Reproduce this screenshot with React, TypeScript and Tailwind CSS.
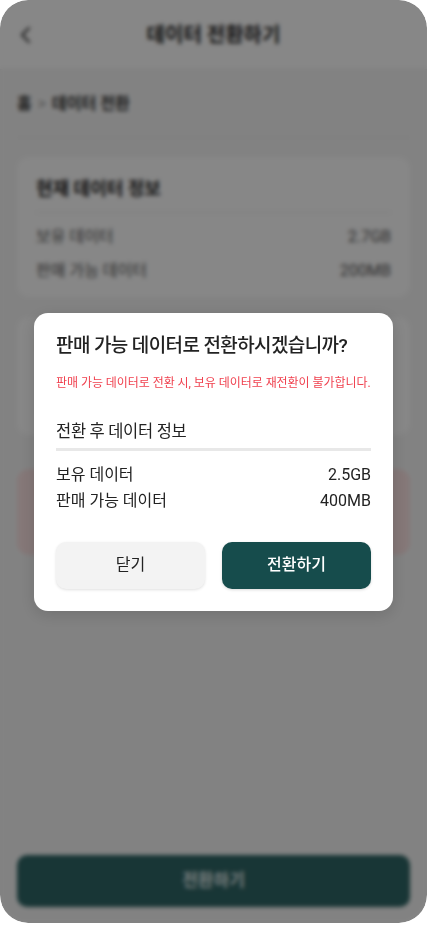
import React from "react";

const font = { fontFamily: 'Roboto, "Noto Sans CJK KR", "Noto Sans", sans-serif' };

function Row({ label, value, cls }: { label: string; value: string; cls: string }) {
  return (
    <div className={`flex items-center justify-between ${cls}`}>
      <span>{label}</span>
      <span>{value}</span>
    </div>
  );
}

export default function App() {
  return (
    <div className="w-[427px] h-[925px] bg-white" style={font}>
      <div className="relative h-[923px] rounded-[28px] overflow-hidden bg-[#f6f6f6] flex flex-col">
        {/* header */}
        <div className="h-[70px] bg-white border-b border-[#eeeeee] flex items-center relative shrink-0">
          <svg className="absolute left-[18px] top-[25px]" width="16" height="20" viewBox="0 0 16 20" fill="none">
            <path d="M11 3 L4 10 L11 17" stroke="#333" strokeWidth="2" strokeLinecap="round" strokeLinejoin="round" />
          </svg>
          <div className="w-full text-center text-[20px] font-semibold text-[#222]">데이터 전환하기</div>
        </div>
        {/* breadcrumb */}
        <div className="px-[17px]">
          <div className="h-[68px] flex items-center gap-[6px] text-[16px] font-semibold text-[#333] border-b border-[#e6e6e6]">
            <span>홈</span>
            <span className="text-[#999] font-normal">&gt;</span>
            <span>데이터 전환</span>
          </div>
        </div>
        {/* card */}
        <div className="mx-[17px] mt-[19px] bg-white rounded-xl px-[19px] pt-[18px] pb-[14px]">
          <div className="text-[18px] font-bold text-[#222] pb-[10px] border-b border-[#efefef]">현재 데이터 정보</div>
          <Row label="보유 데이터" value="2.7GB" cls="text-[16px] text-[#555] mt-[12px] h-[24px]" />
          <Row label="판매 가능 데이터" value="200MB" cls="text-[16px] text-[#555] mt-[10px] h-[24px]" />
        </div>
        {/* second card */}
        <div className="mx-[17px] mt-[20px] bg-white rounded-xl px-[19px] pt-[17px] pb-[16px]">
          <div className="text-[18px] font-bold text-[#222] pb-[10px]">전환할 데이터</div>
          <div className="h-[48px] rounded-lg border border-[#dddddd] flex items-center justify-between px-[14px] text-[15px] text-[#333]">
            <span>200</span>
            <span>MB</span>
          </div>
        </div>
        {/* notice */}
        <div className="mx-[17px] mt-[34px] h-[86px] bg-[#fbe3e3] rounded-xl px-[19px] py-[14px] text-[13px] text-[#e0424f]">
          판매 가능 데이터로 전환 시, 보유 데이터로 재전환이 불가합니다.
        </div>
        <div className="flex-1" />
        <div className="mx-[17px] mb-[16px] h-[52px] rounded-[10px] bg-[#2f6666] flex items-center justify-center text-[17px] font-semibold text-[#e6f0f0]">
          전환하기
        </div>

        {/* overlay */}
        <div className="absolute inset-0 bg-black/[0.47] backdrop-blur-[2px] flex items-center justify-center">
          <div className="w-[359px] bg-white rounded-[14px] px-[22px] pt-[20px] pb-[22px] shadow-[0_4px_16px_rgba(0,0,0,0.15)]">
            <div className="text-[19px] font-medium text-[#222] leading-[26px] tracking-[-0.6px]">판매 가능 데이터로 전환하시겠습니까?</div>
            <div className="mt-[15px] text-[12px] text-[#f0414f] leading-[18px] whitespace-nowrap tracking-[-0.05px]">판매 가능 데이터로 전환 시, 보유 데이터로 재전환이 불가합니다.</div>
            <div className="mt-[28px] text-[16.5px] text-[#222] leading-[24px] pb-[4px] border-b-[3px] border-[#e8e8e8] tracking-[-0.3px]">전환 후 데이터 정보</div>
            <Row label="보유 데이터" value="2.5GB" cls="text-[16px] text-[#222] mt-[13px] h-[22px]" />
            <Row label="판매 가능 데이터" value="400MB" cls="text-[16px] text-[#222] mt-[4px] h-[22px]" />
            <div className="mt-[30px] flex gap-[17px]">
              <div className="flex-1 h-[47px] rounded-[10px] bg-[#f3f3f3] shadow-[0_1px_3px_rgba(0,0,0,0.12)] flex items-center justify-center text-[16px] text-[#222]">닫기</div>
              <div className="flex-1 h-[47px] rounded-[10px] bg-[#164c4c] shadow-[0_1px_3px_rgba(0,0,0,0.15)] flex items-center justify-center text-[16px] text-white font-medium">전환하기</div>
            </div>
          </div>
        </div>
      </div>
    </div>
  );
}
